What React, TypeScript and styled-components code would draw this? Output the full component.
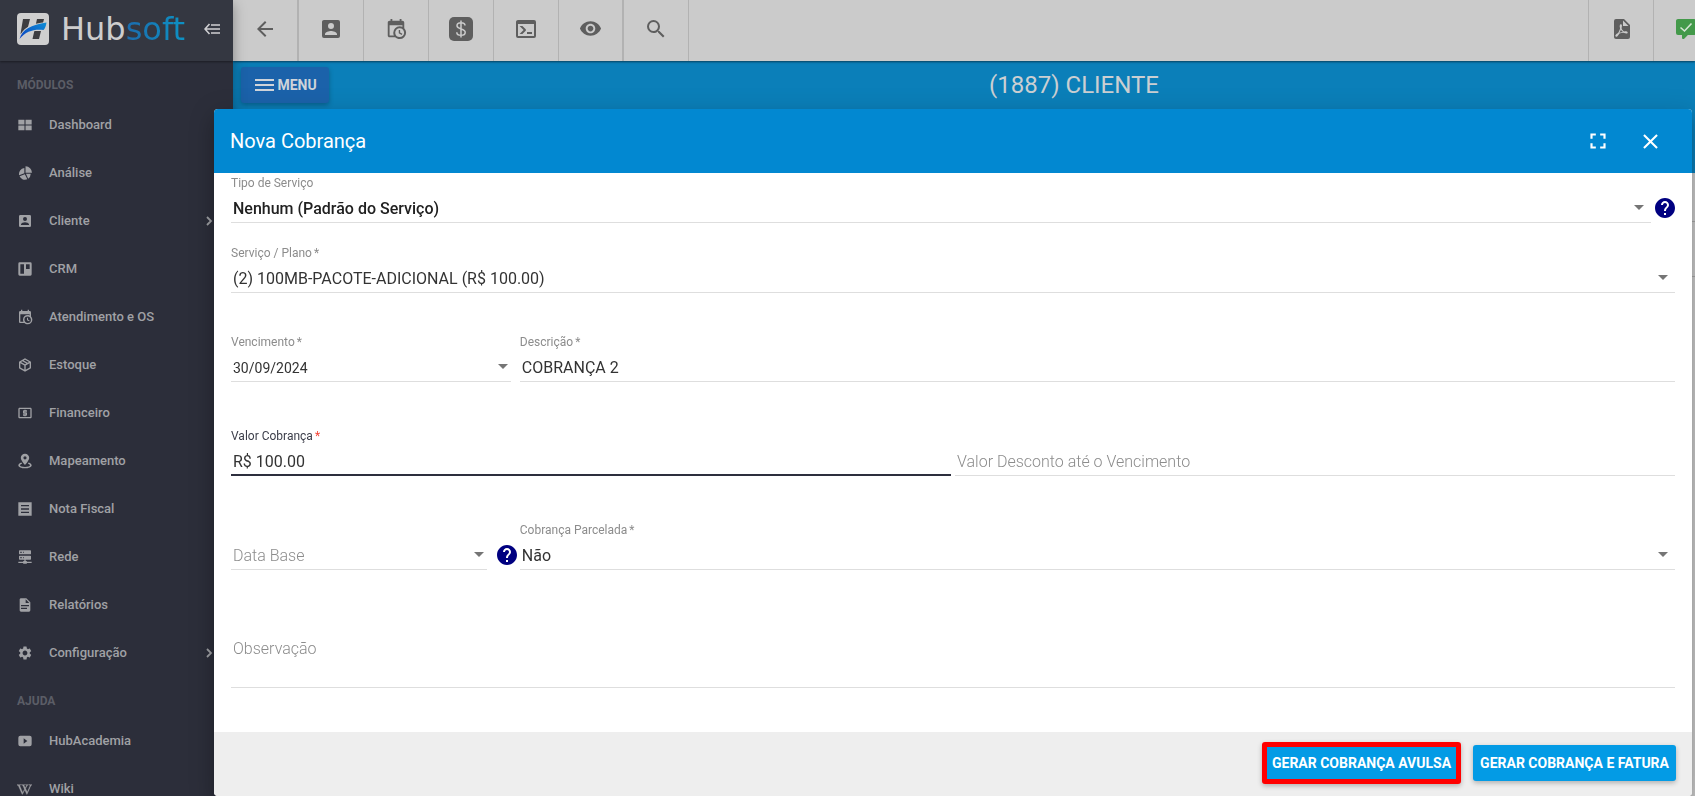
import React from 'react';
import styled, { createGlobalStyle } from 'styled-components';
import {
  MdArrowBack,
  MdSearch,
  MdVisibility,
  MdLocalAtm,
  MdSettings,
  MdFullscreen,
  MdClose,
} from 'react-icons/md';
import { FaWikipediaW } from 'react-icons/fa';

const GlobalStyle = createGlobalStyle`
  *, *::before, *::after { box-sizing: border-box; }
  html, body, #root { height: 100%; }
  body { margin: 0; overflow: hidden; font-family: Roboto, "Liberation Sans", sans-serif; font-size: 14px; }
  button, input, select, textarea { font: inherit; color: inherit; margin: 0; padding: 0; border: 0; background: none; border-radius: 0; outline: none; }
  button { cursor: pointer; }
`;

/* ---------- icons ---------- */

const Glyph = ({ d, size = 24 }: { d: string; size?: number }) => (
  <svg width={size} height={size} viewBox="0 0 24 24" fill="currentColor" fillRule="evenodd" aria-hidden="true">
    <path d={d} />
  </svg>
);

const paths = {
  account:
    'M6,17C6,15 10,13.9 12,13.9C14,13.9 18,15 18,17V18H6M15,9A3,3 0 0,1 12,12A3,3 0 0,1 9,9A3,3 0 0,1 12,6A3,3 0 0,1 15,9M3,5V19A2,2 0 0,0 5,21H19A2,2 0 0,0 21,19V5A2,2 0 0,0 19,3H5C3.89,3 3,3.9 3,5Z',
  calendarClock:
    'M15,13H16.5V15.82L18.94,17.23L18.19,18.53L15,16.69V13M19,8H5V19H9.67C9.24,18.09 9,17.07 9,16A7,7 0 0,1 16,9C17.07,9 18.09,9.24 19,9.67V8M5,21C3.89,21 3,20.1 3,19V5C3,3.89 3.89,3 5,3H6V1H8V3H16V1H18V3H19A2,2 0 0,1 21,5V11.1C22.24,12.36 23,14.09 23,16A7,7 0 0,1 16,23C14.09,23 12.36,22.24 11.1,21H5M16,11.15A4.85,4.85 0 0,0 11.15,16C11.15,18.68 13.32,20.85 16,20.85A4.85,4.85 0 0,0 20.85,16C20.85,13.32 18.68,11.15 16,11.15Z',
  console:
    'M20,19V7H4V19H20M20,3A2,2 0 0,1 22,5V19A2,2 0 0,1 20,21H4A2,2 0 0,1 2,19V5C2,3.89 2.9,3 4,3H20M13,17V15H18V17H13M9.58,13L5.57,9H8.4L11.7,12.3C12.09,12.69 12.09,13.33 11.7,13.72L8.42,17H5.59L9.58,13Z',
  pdf:
    'M14,9H19.5L14,3.5V9M7,2H15L21,8V20A2,2 0 0,1 19,22H7C5.89,22 5,21.1 5,20V4A2,2 0 0,1 7,2M11.93,12.44C12.34,13.34 12.86,14.08 13.46,14.59L13.87,14.91C13,15.07 11.8,15.35 10.53,15.84L10.42,15.88L10.92,14.84C11.37,13.97 11.7,13.18 11.93,12.44M18.41,16.25C18.59,16.07 18.68,15.84 18.69,15.59C18.72,15.39 18.67,15.2 18.57,15.04C18.28,14.57 17.53,14.35 16.29,14.35L15,14.42L14.13,13.84C13.5,13.32 12.93,12.41 12.53,11.28L12.57,11.14C12.9,9.81 13.21,8.2 12.55,7.54C12.39,7.38 12.17,7.3 11.94,7.3H11.7C11.33,7.3 11,7.69 10.91,8.07C10.54,9.4 10.76,10.13 11.13,11.34C10.88,12.23 10.56,13.25 10.05,14.28L9.09,16.08L8.2,16.57C7,17.32 6.43,18.16 6.32,18.69C6.28,18.88 6.3,19.05 6.37,19.23L6.4,19.28L6.88,19.59L7.32,19.7C8.13,19.7 9.05,18.75 10.29,16.63L10.47,16.56C11.5,16.23 12.78,16 14.5,15.81C15.53,16.32 16.74,16.55 17.5,16.55C17.94,16.55 18.24,16.44 18.41,16.25Z',
  board: 'M4,2H20A2,2 0 0,1 22,4V20A2,2 0 0,1 20,22H4A2,2 0 0,1 2,20V4A2,2 0 0,1 4,2M5,5V19H10.500V5H5M13.500,5V12H19V5H13.500Z',
  box:
    'M21,16.5C21,16.88 20.79,17.21 20.47,17.38L12.57,21.82C12.41,21.94 12.21,22 12,22C11.79,22 11.59,21.94 11.43,21.82L3.53,17.38C3.21,17.21 3,16.88 3,16.5V7.5C3,7.12 3.21,6.79 3.53,6.62L11.43,2.18C11.59,2.06 11.79,2 12,2C12.21,2 12.41,2.06 12.57,2.18L20.47,6.62C20.79,6.79 21,7.12 21,7.5V16.5M12,4.15L10.11,5.22L16,8.61L17.96,7.5L12,4.15M6.04,7.5L12,10.85L13.96,9.75L8.08,6.35L6.04,7.5M5,15.91L11,19.29V12.58L5,9.21V15.91M19,15.91V9.21L13,12.58V19.29L19,15.91Z',
  map:
    'M12,1C8.400,1 5.700,3.700 5.700,7.100C5.700,11.400 12,18 12,18S18.300,11.400 18.300,7.100C18.300,3.700 15.600,1 12,1M12,4.800A2.400,2.400 0 0,1 12,9.600A2.400,2.400 0 0,1 12,4.800M6.500,14.200C3.800,15.100 2,16.600 2,18.300C2,21 6.500,23 12,23S22,21 22,18.300C22,16.600 20.200,15.100 17.500,14.200L16.300,16C18.300,16.600 19.500,17.400 19.500,18.300C19.500,19.700 16.100,20.900 12,20.900S4.500,19.700 4.500,18.300C4.500,17.400 5.700,16.600 7.700,16Z',
  list: 'M2,2H22V22H2V2M6,6V8H18V6H6M6,11V13H18V11H6M6,16V18H18V16H6Z',
  server:
    'M13,18H14A1,1 0 0,1 15,19H22V21H15A1,1 0 0,1 14,22H10A1,1 0 0,1 9,21H2V19H9A1,1 0 0,1 10,18H11V16H4A1,1 0 0,1 3,15V11A1,1 0 0,1 4,10H20A1,1 0 0,1 21,11V15A1,1 0 0,1 20,16H13V18M4,2H20A1,1 0 0,1 21,3V7A1,1 0 0,1 20,8H4A1,1 0 0,1 3,7V3A1,1 0 0,1 4,2M9,6H10V4H9V6M9,14H10V12H9V14M5,4V6H7V4H5M5,12V14H7V12H5Z',
  file:
    'M13,9H18.5L13,3.5V9M6,2H14L20,8V20A2,2 0 0,1 18,22H6C4.89,22 4,21.1 4,20V4C4,2.89 4.89,2 6,2M15,18V16H6V18H15M18,14V12H6V14H18Z',
  tiles: 'M2,4H11.200V11.200H2V4M12.800,4H22V11.200H12.800V4M2,12.800H11.200V20H2V12.800M12.800,12.800H22V20H12.800V12.800Z',
  pie: 'M11,4.500V12.500L3.200,15.500A9,9 0 0,1 11,4.500M11.800,13.800L15.500,21.500A9,9 0 0,1 3.800,17L11.800,13.800M13.400,13H20.500A9,9 0 0,1 16.800,20.700L13.400,13M12.800,2V11.500H22.500A9.500,9.500 0 0,0 12.800,2Z',
  video: 'M5,4H19A3,3 0 0,1 22,7V17A3,3 0 0,1 19,20H5A3,3 0 0,1 2,17V7A3,3 0 0,1 5,4M10,8V16L15.500,12L10,8Z',
};

const DollarIcon = () => (
  <svg width="24" height="24" viewBox="0 0 24 24" aria-hidden="true">
    <rect width="24" height="24" rx="5" fill="currentColor" />
    <path
      d="M12 3.500V20.500M16 8.600C16 6.700 14.300 5.800 12 5.800S8 6.900 8 8.800C8 12.800 16.200 11 16.200 15.200C16.200 17.200 14.400 18.300 12 18.300S7.800 17.200 7.800 15.200"
      fill="none"
      stroke="#cbcbcb"
      strokeWidth="1.500"
    />
  </svg>
);

const ChatOkIcon = () => (
  <svg width="24" height="24" viewBox="0 0 24 24" aria-hidden="true">
    <path
      fill="#43994a"
      d="M9,22A1,1 0 0,1 8,21V18H4A2,2 0 0,1 2,16V4C2,2.890 2.900,2 4,2H20A2,2 0 0,1 22,4V16A2,2 0 0,1 20,18H13.900L10.200,21.710C10,21.900 9.750,22 9.500,22H9Z"
    />
    <path d="M6.500 10.500L10.500 14L17.500 6.500" fill="none" stroke="#d5e5d5" strokeWidth="1.600" />
  </svg>
);

const ChevronIcon = () => (
  <svg width="18" height="18" viewBox="0 0 18 18" fill="none" stroke="currentColor" strokeWidth="1.800" aria-hidden="true">
    <path d="M7 5L11 9L7 13" />
  </svg>
);

const CollapseIcon = () => (
  <svg width="16" height="12" viewBox="0 0 16 12" fill="none" stroke="#cfcfd2" strokeWidth="1.600" aria-hidden="true">
    <path d="M5.500 1L1 6L5.500 11M1 6H16M7 2H16M7 10H16" />
  </svg>
);

const BurgerIcon = () => (
  <svg width="19" height="12" viewBox="0 0 19 12" fill="#cfd4da" aria-hidden="true">
    <path d="M0 0H19V2H0ZM0 5H19V7H0ZM0 10H19V12H0Z" />
  </svg>
);

const LogoMark = () => (
  <svg width="32" height="32" viewBox="0 0 32 32" aria-hidden="true">
    <defs>
      <linearGradient id="swoosh" x1="0" y1="1" x2="1" y2="0">
        <stop offset="0" stopColor="#0b3fc0" />
        <stop offset="1" stopColor="#0e8fd6" />
      </linearGradient>
    </defs>
    <rect width="32" height="32" rx="4" fill="#cfcfcf" />
    <path d="M6 6H13L10 18L3.500 21ZM20 6H27L22 26H15.500Z" fill="#3d3d40" />
    <path d="M2.500 26C4 15 14 10.500 29.500 9C29.500 13 28.500 16 26.500 18.500C17 17 9 19 2.500 26Z" fill="#cfcfcf" />
    <path d="M2.500 26C5.500 16 14 12 29.500 9.500C29 13 28 15.500 26.500 17C17 16 9 18 2.500 26Z" fill="url(#swoosh)" />
  </svg>
);

const HelpIcon = () => (
  <svg width="20" height="20" viewBox="2 2 20 20" fill="currentColor" aria-hidden="true">
    <path d="M12 2C6.480 2 2 6.480 2 12s4.480 10 10 10 10-4.480 10-10S17.520 2 12 2zm1 17h-2v-2h2v2zm2.070-7.750l-.9.920C13.450 12.900 13 13.500 13 15h-2v-.5c0-1.100.450-2.100 1.170-2.830l1.240-1.260c.370-.360.590-.860.590-1.410 0-1.100-.9-2-2-2s-2 .9-2 2H8c0-2.210 1.790-4 4-4s4 1.790 4 4c0 .880-.360 1.680-.930 2.250z" />
  </svg>
);

/* ---------- page frame ---------- */

const Page = styled.div`
  display: flex;
  height: 100vh;
  overflow: hidden;
  background: #cbcbcb;
`;

const Sidebar = styled.aside`
  flex: 0 0 233px;
  display: flex;
  flex-direction: column;
  overflow: hidden;
  background: #2c2e3a;
  box-shadow: 0 4px 12px rgba(0, 0, 0, 0.35);
  z-index: 1;
`;

const Brand = styled.div`
  flex: 0 0 61px;
  display: flex;
  align-items: center;
  padding: 0 13px 3px 17px;
  background: #343741;
  box-shadow: 0 1px 2px rgba(0, 0, 0, 0.4);
`;

const BrandName = styled.span`
  flex: 1;
  margin-left: 12px;
  font-family: 'DejaVu Sans', sans-serif;
  font-weight: 400;
  font-size: 32px;
  line-height: 32px;
  color: #cdcdcd;
`;

const BrandAccent = styled.span`
  color: transparent;
  background: linear-gradient(90deg, #1c6cae, #0d92c4);
  background-clip: text;
`;

const PlainButton = styled.button`
  display: flex;
  align-items: center;
  justify-content: center;
`;

const SectionTitle = styled.h2`
  flex: none;
  margin: 0;
  padding: 8px 17px 0;
  font-size: 12px;
  font-weight: 700;
  line-height: 32px;
  color: #5b5d66;
`;

const NavLink = styled.a`
  flex: 0 0 48px;
  display: flex;
  align-items: center;
  padding: 0 15px 0 17px;
  font-size: 13px;
  font-weight: 500;
  color: #a0a1a5;
  text-decoration: none;
`;

const NavIcon = styled.span`
  display: flex;
  width: 32px;
`;

const NavText = styled.span`
  flex: 1;
  padding-bottom: 2px;
`;

const Main = styled.main`
  flex: 1;
  min-width: 0;
  display: flex;
  flex-direction: column;
`;

const Toolbar = styled.header`
  flex: 0 0 61px;
  display: flex;
  color: #5e5e5e;
  box-shadow: 0 1px 2px rgba(0, 0, 0, 0.5);
  z-index: 0;
`;

const ToolButton = styled(PlainButton)<{ $edge?: number; $wide?: boolean }>`
  flex: none;
  width: ${(p) => (p.$wide ? 66 : 65)}px;
  padding-bottom: 4px;
  border-right: ${(p) => p.$edge ?? 1}px solid #b2b2b2;
`;

const ToolEnd = styled.div`
  flex: 0 0 107px;
  display: flex;
  margin-left: auto;
  overflow: hidden;
  border-left: 1px solid #b2b2b2;
`;

const Banner = styled.section`
  flex: 0 0 112px;
  background: #0b7fb9;
`;

const BannerRow = styled.div`
  display: flex;
  align-items: center;
  height: 48px;
  padding-left: 8px;
`;

const MenuButton = styled(PlainButton)`
  gap: 3px;
  width: 88px;
  height: 36px;
  padding-left: 2px;
  border-radius: 3px;
  background: #1b62aa;
  box-shadow: 0 2px 5px rgba(0, 0, 0, 0.26);
  font-weight: 700;
  color: #cfd4da;
`;

const BannerTitle = styled.h1`
  flex: 1;
  margin: 0;
  padding-left: 124px;
  text-align: center;
  font-size: 24px;
  font-weight: 400;
  color: #cbcfd2;
`;

const ListLine = styled.div`
  flex: 0 0 55px;
  border-top: 1px solid #a8a8a8;
  &:first-of-type { margin-top: 48px; }
`;

/* ---------- dialog ---------- */

const Dialog = styled.div`
  position: fixed;
  top: 109px;
  right: 3px;
  bottom: 0;
  left: 214px;
  z-index: 2;
  display: flex;
  flex-direction: column;
  overflow: hidden;
  border-radius: 4px;
  background: #fff;
  box-shadow: 0 7px 8px -4px rgba(0, 0, 0, 0.2), 0 13px 19px 2px rgba(0, 0, 0, 0.14), 0 5px 24px 4px rgba(0, 0, 0, 0.12);
`;

const DialogHeader = styled.header`
  flex: 0 0 64px;
  display: flex;
  align-items: center;
  gap: 12px;
  padding: 0 22px 0 16px;
  background: #0288d1;
  color: #fff;
`;

const DialogTitle = styled.h2`
  flex: 1;
  margin: 0;
  font-size: 20px;
  font-weight: 400;
`;

const HeaderButton = styled(PlainButton)`
  width: 40px;
  height: 40px;
`;

const DialogForm = styled.form`
  flex: 1;
  min-height: 0;
  display: flex;
  flex-direction: column;
`;

const DialogBody = styled.div`
  flex: 1;
  min-height: 0;
  overflow: hidden;
  padding: 2px 17px 0;
`;

const Row = styled.div<{ $top?: number; $columns?: string; $gap?: number }>`
  display: grid;
  grid-template-columns: ${(p) => p.$columns ?? '1fr'};
  column-gap: ${(p) => p.$gap ?? 0}px;
  margin-top: ${(p) => p.$top ?? 0}px;
`;

const Cell = styled.div<{ $gap?: number; $end?: number }>`
  display: flex;
  align-items: flex-end;
  gap: ${(p) => p.$gap ?? 0}px;
  padding-right: ${(p) => p.$end ?? 0}px;
`;

const FieldBox = styled.div`
  flex: 1;
  min-width: 0;
  display: flex;
  flex-direction: column;
  justify-content: flex-end;
  gap: 2px;
  min-height: 48px;
`;

const FieldLabel = styled.label<{ $active?: boolean }>`
  font-size: 12px;
  line-height: 16px;
  color: ${(p) => (p.$active ? '#3c3e4a' : '#8c8c8c')};
`;

const Mark = styled.span<{ $active?: boolean }>`
  margin-left: 2px;
  color: ${(p) => (p.$active ? '#f44336' : 'inherit')};
`;

const Line = styled.div<{ $active?: boolean; $caretEnd?: number }>`
  display: flex;
  align-items: center;
  height: 30px;
  padding-right: ${(p) => p.$caretEnd ?? 0}px;
  border-bottom: ${(p) => (p.$active ? '2px solid #2d2f3e' : '1px solid #dedede')};
`;

const Caret = styled.span`
  border: 5px solid transparent;
  border-top-color: #757575;
  border-bottom-width: 0;
`;

const Select = styled.select<{ $strong?: boolean }>`
  flex: 1;
  min-width: 0;
  height: 28px;
  padding: 2px 2px 0;
  appearance: none;
  font-size: 16px;
  font-weight: ${(p) => (p.$strong ? 500 : 400)};
  color: ${(p) => (p.$strong ? '#212121' : '#333')};
`;

const Input = styled.input<{ $small?: boolean }>`
  flex: 1;
  min-width: 0;
  height: 28px;
  padding: 2px 2px 0;
  font-size: ${(p) => (p.$small ? 14 : 16)}px;
  color: #333;
  &::placeholder { color: #8c8c8c; opacity: 1; font-weight: 300; }
`;

const Notes = styled.textarea`
  display: block;
  width: 100%;
  height: 54px;
  padding: 3px 2px;
  resize: none;
  border-bottom: 1px solid #dedede;
  font-size: 16px;
  line-height: 24px;
  &::placeholder { color: #8c8c8c; opacity: 1; font-weight: 300; }
`;

const HelpButton = styled(PlainButton)`
  height: 30px;
  color: #000080;
`;

const DialogFooter = styled.footer`
  flex: 0 0 64px;
  display: flex;
  align-items: center;
  justify-content: flex-end;
  gap: 12px;
  padding: 0 16px 2px 0;
  background: #eee;
`;

const ActionButton = styled.button<{ $marked?: boolean }>`
  height: ${(p) => (p.$marked ? 42 : 36)}px;
  padding: 0 ${(p) => (p.$marked ? 5 : 7)}px;
  border: ${(p) => (p.$marked ? '5px solid #f00' : '0')};
  border-radius: 3px;
  background: #039be5;
  box-shadow: 0 2px 5px rgba(0, 0, 0, 0.26);
  font-size: 14px;
  font-weight: 700;
  white-space: nowrap;
  color: #fff;
`;

/* ---------- composition ---------- */

type FieldProps = {
  id: string;
  label?: string;
  required?: boolean;
  active?: boolean;
  caretEnd?: number;
  children: React.ReactNode;
};

const Field = ({ id, label, required, active, caretEnd, children }: FieldProps) => (
  <FieldBox>
    {label && (
      <FieldLabel htmlFor={id} $active={active}>
        {label}
        {required && <Mark $active={active}>*</Mark>}
      </FieldLabel>
    )}
    <Line $active={active} $caretEnd={caretEnd}>
      {children}
      {caretEnd !== undefined && <Caret />}
    </Line>
  </FieldBox>
);

type Item = { text: string; icon: React.ReactNode; more?: boolean };

const modules: Item[] = [
  { text: 'Dashboard', icon: <Glyph size={16} d={paths.tiles} /> },
  { text: 'Análise', icon: <Glyph size={16} d={paths.pie} /> },
  { text: 'Cliente', icon: <Glyph size={16} d={paths.account} />, more: true },
  { text: 'CRM', icon: <Glyph size={16} d={paths.board} /> },
  { text: 'Atendimento e OS', icon: <Glyph size={16} d={paths.calendarClock} /> },
  { text: 'Estoque', icon: <Glyph size={16} d={paths.box} /> },
  { text: 'Financeiro', icon: <MdLocalAtm size={16} /> },
  { text: 'Mapeamento', icon: <Glyph size={16} d={paths.map} /> },
  { text: 'Nota Fiscal', icon: <Glyph size={16} d={paths.list} /> },
  { text: 'Rede', icon: <Glyph size={16} d={paths.server} /> },
  { text: 'Relatórios', icon: <Glyph size={16} d={paths.file} /> },
  { text: 'Configuração', icon: <MdSettings size={16} />, more: true },
];

const help: Item[] = [
  { text: 'HubAcademia', icon: <Glyph size={16} d={paths.video} /> },
  { text: 'Wiki', icon: <FaWikipediaW size={15} stroke="currentColor" strokeWidth={16} /> },
];

const NavItem = ({ text, icon, more }: Item) => (
  <NavLink href="#">
    <NavIcon>{icon}</NavIcon>
    <NavText>{text}</NavText>
    {more && <ChevronIcon />}
  </NavLink>
);

export default function App() {
  return (
    <>
      <GlobalStyle />
      <Page>
        <Sidebar>
          <Brand>
            <LogoMark />
            <BrandName>
              Hub<BrandAccent>soft</BrandAccent>
            </BrandName>
            <PlainButton type="button" aria-label="Recolher menu">
              <CollapseIcon />
            </PlainButton>
          </Brand>
          <SectionTitle>MÓDULOS</SectionTitle>
          {modules.map((item) => (
            <NavItem key={item.text} {...item} />
          ))}
          <SectionTitle>AJUDA</SectionTitle>
          {help.map((item) => (
            <NavItem key={item.text} {...item} />
          ))}
        </Sidebar>

        <Main>
          <Toolbar>
            <ToolButton type="button" aria-label="Voltar" $edge={2} $wide><MdArrowBack size={24} /></ToolButton>
            <ToolButton type="button" aria-label="Clientes"><Glyph d={paths.account} /></ToolButton>
            <ToolButton type="button" aria-label="Agenda"><Glyph size={22} d={paths.calendarClock} /></ToolButton>
            <ToolButton type="button" aria-label="Financeiro"><DollarIcon /></ToolButton>
            <ToolButton type="button" aria-label="Console"><Glyph d={paths.console} /></ToolButton>
            <ToolButton type="button" aria-label="Visualizar" $edge={2}><MdVisibility size={23} /></ToolButton>
            <ToolButton type="button" aria-label="Pesquisar"><MdSearch size={24} /></ToolButton>
            <ToolEnd>
              <ToolButton type="button" aria-label="PDF"><Glyph d={paths.pdf} /></ToolButton>
              <ToolButton type="button" aria-label="Mensagens"><ChatOkIcon /></ToolButton>
            </ToolEnd>
          </Toolbar>
          <Banner>
            <BannerRow>
              <MenuButton type="button">
                <BurgerIcon />
                MENU
              </MenuButton>
              <BannerTitle>(1887) CLIENTE</BannerTitle>
            </BannerRow>
          </Banner>
          <ListLine />
          <ListLine />
        </Main>

        <Dialog role="dialog" aria-labelledby="dialog-title">
          <DialogHeader>
            <DialogTitle id="dialog-title">Nova Cobrança</DialogTitle>
            <HeaderButton type="button" aria-label="Tela cheia"><MdFullscreen size={26} /></HeaderButton>
            <HeaderButton type="button" aria-label="Fechar"><MdClose size={25} /></HeaderButton>
          </DialogHeader>

          <DialogForm onSubmit={(e) => e.preventDefault()}>
            <DialogBody>
              <Row>
                <Cell $gap={4}>
                  <Field id="tipo" label="Tipo de Serviço" caretEnd={7}>
                    <Select id="tipo" $strong>
                      <option>Nenhum (Padrão do Serviço)</option>
                    </Select>
                  </Field>
                  <HelpButton type="button" aria-label="Ajuda: Tipo de Serviço"><HelpIcon /></HelpButton>
                </Cell>
              </Row>

              <Row $top={22}>
                <Field id="servico" label="Serviço / Plano" required caretEnd={7}>
                  <Select id="servico">
                    <option>(2) 100MB-PACOTE-ADICIONAL (R$ 100.00)</option>
                  </Select>
                </Field>
              </Row>

              <Row $top={41} $columns="20% 80%">
                <Cell $end={9}>
                  <Field id="vencimento" label="Vencimento" required caretEnd={3}>
                    <Input id="vencimento" $small defaultValue="30/09/2024" />
                  </Field>
                </Cell>
                <Field id="descricao" label="Descrição" required>
                  <Input id="descricao" defaultValue="COBRANÇA 2" />
                </Field>
              </Row>

              <Row $top={46} $columns="1fr 1fr" $gap={4}>
                <Field id="valor" label="Valor Cobrança" required active>
                  <Input id="valor" defaultValue="R$ 100.00" />
                </Field>
                <Field id="desconto">
                  <Input id="desconto" aria-label="Valor Desconto até o Vencimento" placeholder="Valor Desconto até o Vencimento" />
                </Field>
              </Row>

              <Row $top={46} $columns="20% 80%">
                <Cell $gap={10} $end={3}>
                  <Field id="base" caretEnd={3}>
                    <Input id="base" aria-label="Data Base" placeholder="Data Base" />
                  </Field>
                  <HelpButton type="button" aria-label="Ajuda: Data Base"><HelpIcon /></HelpButton>
                </Cell>
                <Field id="parcelada" label="Cobrança Parcelada" required caretEnd={7}>
                  <Select id="parcelada">
                    <option>Não</option>
                  </Select>
                </Field>
              </Row>

              <Row $top={64}>
                <Notes aria-label="Observação" placeholder="Observação" />
              </Row>
            </DialogBody>

            <DialogFooter>
              <ActionButton type="submit" $marked>GERAR COBRANÇA AVULSA</ActionButton>
              <ActionButton type="button">GERAR COBRANÇA E FATURA</ActionButton>
            </DialogFooter>
          </DialogForm>
        </Dialog>
      </Page>
    </>
  );
}
